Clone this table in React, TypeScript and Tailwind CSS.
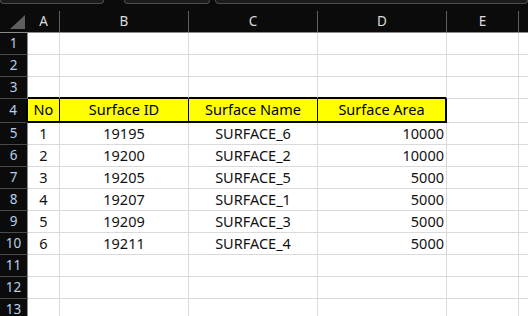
const cols = [
  { key: "A", w: "w-[32px]" },
  { key: "B", w: "w-[129px]" },
  { key: "C", w: "w-[129px]" },
  { key: "D", w: "w-[129px]" },
  { key: "E", w: "w-[72px]" },
];

const data = [
  ["1", "19195", "SURFACE_6", "10000"],
  ["2", "19200", "SURFACE_2", "10000"],
  ["3", "19205", "SURFACE_5", "5000"],
  ["4", "19207", "SURFACE_1", "5000"],
  ["5", "19209", "SURFACE_3", "5000"],
  ["6", "19211", "SURFACE_4", "5000"],
];

const headers = ["No", "Surface ID", "Surface Name", "Surface Area"];

const font = { fontFamily: '"Noto Sans", "Noto Sans CJK KR", sans-serif' };

function RowHead({ n, h, black }: { n: number; h: string; black?: boolean }) {
  return (
    <div
      className={`w-[28px] shrink-0 ${h} flex items-center justify-center bg-[#0b0b0b] border-b border-b-[#4a4a4a] border-r ${
        black ? "border-r-2 border-r-black" : "border-r-[#8a8a8a]"
      } text-[13.5px] text-[#b9cfe8]`}
    >
      {n}
    </div>
  );
}

function EmptyRow({ n, last }: { n: number; last?: boolean }) {
  return (
    <div className="flex">
      <RowHead n={n} h="h-[22px]" />
      {cols.map((c) => (
        <div
          key={c.key}
          className={`${c.w} shrink-0 h-[22px] border-r border-b border-[#dadada] ${
            last && c.key !== "E" ? "border-b-2 border-b-black" : ""
          }`}
        />
      ))}
      <div className="flex-1 h-[22px] border-b border-[#dadada]" />
    </div>
  );
}

export default function App() {
  return (
    <div className="w-[528px] h-[316px] overflow-hidden bg-white text-black" style={font}>
      {/* tab strip */}
      <div className="h-[4px] bg-[#0b0b0b] flex gap-[20px] items-start">
        <div className="w-[104px] h-[4px] bg-[#1c1c1c] border border-t-0 border-[#4d4d4d] rounded-b-[4px]" />
        <div className="w-[86px] h-[4px] bg-[#1c1c1c] border border-t-0 border-[#4d4d4d] rounded-b-[4px]" />
        <div className="flex-1 -ml-[15px] h-[4px] bg-[#1c1c1c] border border-t-0 border-[#4d4d4d] rounded-b-[4px]" />
      </div>
      {/* column header */}
      <div className="flex bg-[#0b0b0b] h-[29px] border-b border-[#8a8a8a]">
        <div className="w-[28px] shrink-0 flex items-end justify-end pr-[3px] pb-[3px]">
          <svg width="15" height="14" viewBox="0 0 15 14">
            <polygon points="15,0 15,14 0,14" fill="#5e5e5e" />
          </svg>
        </div>
        {cols.map((c) => (
          <div key={c.key} className={`${c.w} shrink-0 flex flex-col`}>
            <div className="h-[7px]" />
            <div className="flex-1 flex items-center justify-center border-r border-[#5e5e5e] text-[13.5px] text-[#dcdcdc]">
              {c.key}
            </div>
          </div>
        ))}
        <div className="flex-1" />
      </div>

      <EmptyRow n={1} />
      <EmptyRow n={2} />
      <EmptyRow n={3} last />

      {/* header row */}
      <div className="flex">
        <RowHead n={4} h="h-[24px]" black />
        {headers.map((t, i) => (
          <div
            key={t}
            className={`${cols[i].w} shrink-0 h-[24px] bg-[#ffff00] border-b-2 border-b-black border-r ${
              i === 3 ? "border-r-2" : ""
            } border-r-black flex items-center justify-center text-[14.5px]`}
          >
            {t}
          </div>
        ))}
        <div className="w-[72px] shrink-0 h-[24px] border-r border-b border-[#dadada]" />
        <div className="flex-1 h-[24px] border-b border-[#dadada]" />
      </div>

      {data.map((r, ri) => (
        <div key={ri} className="flex">
          <RowHead n={ri + 5} h="h-[22px]" />
          {r.map((v, i) => (
            <div
              key={i}
              className={`${cols[i].w} shrink-0 h-[22px] border-r border-b border-[#dadada] flex items-center text-[14.5px] text-[#111] ${
                i === 3 ? "justify-end pr-[2px]" : "justify-center"
              }`}
            >
              {v}
            </div>
          ))}
          <div className="w-[72px] shrink-0 h-[22px] border-r border-b border-[#dadada]" />
          <div className="flex-1 h-[22px] border-b border-[#dadada]" />
        </div>
      ))}

      <EmptyRow n={11} />
      <EmptyRow n={12} />
      <EmptyRow n={13} />
    </div>
  );
}
